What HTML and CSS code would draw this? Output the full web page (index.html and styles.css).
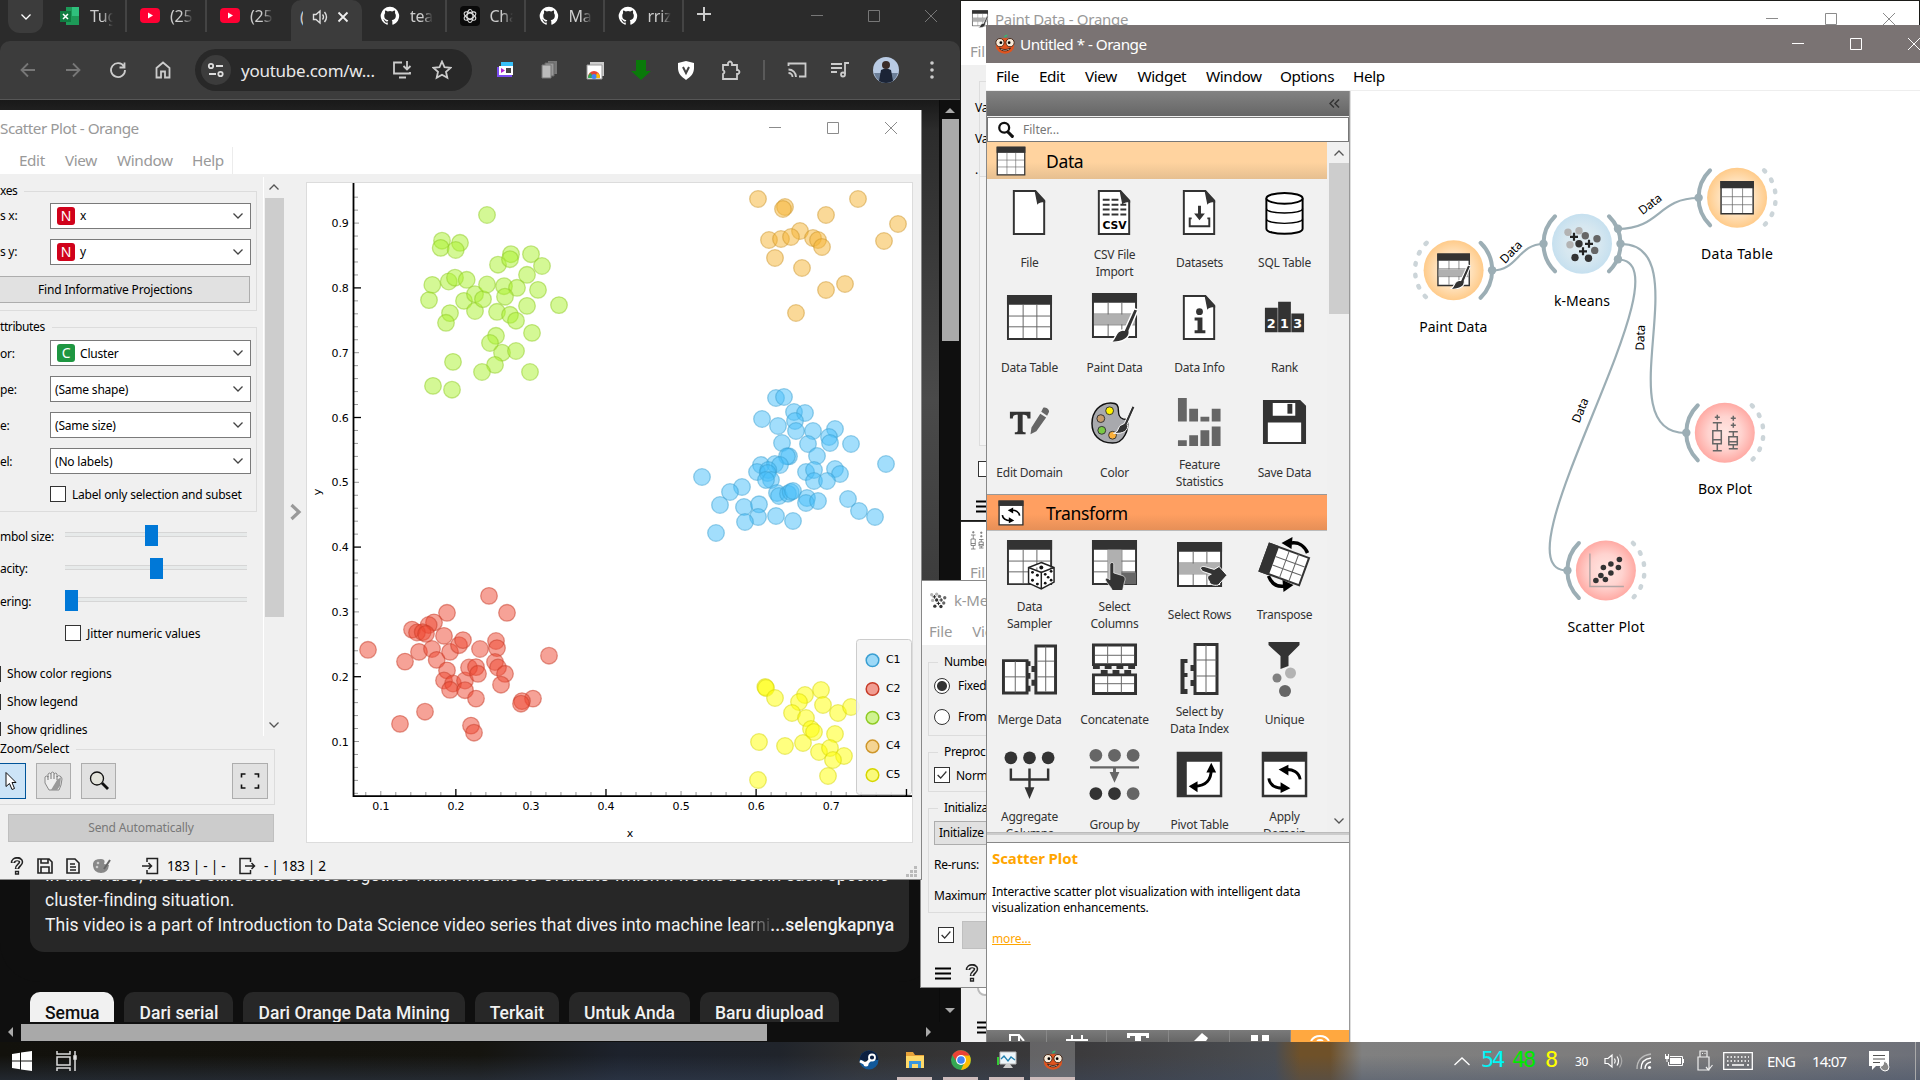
FILE: index.html
```html
<!DOCTYPE html>
<html lang="en">
<head>
<meta charset="utf-8">
<title>Untitled * - Orange</title>
<link rel="stylesheet" href="styles.css">
</head>
<body>
<svg class="sprite" aria-hidden="true">
  <defs>
    <radialGradient id="g-data"><stop offset="0" stop-color="#fff0dc"/><stop offset=".55" stop-color="#ffe3bf"/><stop offset="1" stop-color="#ffcb8a"/></radialGradient>
    <radialGradient id="g-unsup"><stop offset="0" stop-color="#e2edf2"/><stop offset=".6" stop-color="#d6e7f0"/><stop offset="1" stop-color="#c6e0ef"/></radialGradient>
    <radialGradient id="g-vis"><stop offset="0" stop-color="#ffe6e2"/><stop offset=".55" stop-color="#ffd3cf"/><stop offset="1" stop-color="#ffaaa4"/></radialGradient>
  </defs>
  <symbol id="i-table" viewBox="0 0 48 48"><path fill="#fff" stroke="#333" stroke-width="2" d="M2 2h44v44H2z"/><path fill="#333" d="M1 1h46v10H1z"/><path stroke="#666" d="M3 22.500h42M3 33.500h42M17.500 11v34M31.500 11v34"/></symbol>
  <symbol id="i-brush" viewBox="0 0 48 48"><path fill="#333" stroke="#fff" stroke-width="1.500" d="M44 15l4 1.500-9 21c1 7-5 12-20 12 6-2 5-8 9-11 2-1.500 4-2 6-1.500z"/></symbol>
  <symbol id="i-paint" viewBox="0 0 48 52"><use href="#i-table" width="48" height="48"/><path fill="#b0b0b0" d="M3 23h42v10H3z"/><use href="#i-brush" width="48" height="50" y="1"/></symbol>
  <symbol id="i-page" viewBox="0 0 48 48"><path fill="#fff" stroke="#333" stroke-width="2" d="M8 2h22l9 10v34H8z"/><path fill="#333" d="M29 1l11 11v2c-4-1-6 0-8 2z"/></symbol>
  <symbol id="i-csv" viewBox="0 0 48 48"><use href="#i-page"/><path stroke="#333" stroke-width="2" stroke-dasharray="7 2" d="M12 11h17M12 16h24M12 21h24M12 26h24"/><text x="24" y="41" text-anchor="middle" class="csv-text">CSV</text></symbol>
  <symbol id="i-datasets" viewBox="0 0 48 48"><use href="#i-page"/><path fill="#333" d="M22.500 17h3v8h4L24 32l-5.500-7h4z"/><path fill="none" stroke="#333" stroke-width="2" d="M16 30h-2v8h20v-8h-2"/></symbol>
  <symbol id="i-sql" viewBox="0 0 48 48"><path fill="#fff" stroke="#000" stroke-width="2" d="M5.500 9.500v31c0 7 37 7 37 0v-31"/><ellipse cx="24" cy="9.500" rx="18.500" ry="5.500" fill="#fff" stroke="#000" stroke-width="2"/><path fill="none" stroke="#000" stroke-width="1.300" d="M5.500 20c0 6 37 6 37 0M5.500 30.500c0 6 37 6 37 0"/></symbol>
  <symbol id="i-info" viewBox="0 0 48 48"><use href="#i-page"/><circle cx="24" cy="18" r="3.500" fill="#333"/><path fill="#333" d="M19 24h8v13h3v3H19v-3h3V27h-3z"/></symbol>
  <symbol id="i-rank" viewBox="0 0 48 48"><path fill="#333" d="M4 14h13v25H4zM17.500 8h13v31h-13zM31 20h13v19H31z"/><text class="rank-text" x="10.500" y="35" text-anchor="middle">2</text><text class="rank-text" x="24" y="35" text-anchor="middle">1</text><text class="rank-text" x="37.500" y="35" text-anchor="middle">3</text></symbol>
  <symbol id="i-domain" viewBox="0 0 48 48"><path fill="#333" d="M4 13h21v7h-3c0-3-1-4-5-4v16c0 2 1 2 3 2v2H9v-2c2 0 3 0 3-2V16c-4 0-5 1-5 4H4z"/><path fill="#666" d="M35 15l6 4-10 14-6 3 1-7zM38 9c4-1 6 2 6 4l-2 4-6-4z"/></symbol>
  <symbol id="i-color" viewBox="0 0 48 48"><path fill="#a8a9ad" stroke="#111" stroke-width="1.500" d="M20 4c7 0 8 3 8 8 0 7 3 9 9 9 2 10-3 24-15 24C8 45 1 36 1 25 1 13 9 4 20 4z"/><circle cx="19" cy="12" r="4" fill="#fff200" stroke="#333"/><circle cx="10" cy="20" r="4" fill="#c69c6d" stroke="#333"/><circle cx="11" cy="32" r="4" fill="#7ac943" stroke="#333"/><circle cx="22" cy="37" r="4" fill="#fbb03b" stroke="#333"/><path fill="#333" stroke="#fff" d="M42 7l3 1-8 18c2 6-4 10-14 9 5-1 4-5 7-8l4-2z"/></symbol>
  <symbol id="i-stats" viewBox="0 0 48 52"><path fill="#666" d="M2 1h9v24H2zM13.500 12h9v13h-9zM25 20h9v5h-9zM36.500 12h9v13h-9zM2 44h9v6H2zM13.500 39h9v11h-9zM25 34h9v16h-9zM36.500 30h9v20h-9z"/></symbol>
  <symbol id="i-save" viewBox="0 0 48 48"><path fill="#333" d="M2 1h38l6 6v39H2z"/><path fill="#fff" d="M12 4h23v13H12zM7 24h34v20H7z"/><path fill="#333" d="M27 5h5v10h-5z"/></symbol>
  <symbol id="i-spin" viewBox="0 0 48 48"><path fill="none" stroke="#000" stroke-width="3" d="M8 26c1 7 7 10 15 10M40 27c-1-7-8-11-15-10"/><path d="M28 12l-10 5 10 6zM20 30l10 6-10 5z"/></symbol>
  <symbol id="i-apply" viewBox="0 0 48 48"><path fill="#fff" stroke="#333" stroke-width="2.500" d="M2 2h44v44H2z"/><path fill="#333" d="M1 1h46v10H1z"/><use href="#i-spin" y="2"/></symbol>
  <symbol id="i-sampler" viewBox="0 0 52 52"><use href="#i-table" width="48" height="48"/><path fill="#fff" stroke="#222" stroke-width="1.500" d="M36 24l13 5v15l-13 7-13-6V29zM23 29l13 5 13-5M36 34v17"/><g fill="#111"><circle cx="36" cy="29" r="2"/><circle cx="27" cy="34" r="1.500"/><circle cx="32" cy="37" r="1.500"/><circle cx="27" cy="42" r="1.500"/><circle cx="32" cy="46" r="1.500"/><circle cx="40" cy="36" r="1.400"/><circle cx="46" cy="33" r="1.400"/><circle cx="43" cy="39" r="1.400"/><circle cx="40" cy="45" r="1.400"/><circle cx="46" cy="42" r="1.400"/></g></symbol>
  <symbol id="i-hand" viewBox="0 0 48 48"><path fill="#333" stroke="#fff" d="M10 2c4-2 5 1 5 3v13l13 4c5 1 6 5 4 10l-2 9-1 5H13c-1-5-9-12-11-17 0-4 4-3 7 0V5z"/></symbol>
  <symbol id="i-columns" viewBox="0 0 48 52"><use href="#i-table" width="48" height="48"/><path fill="#b0b0b0" d="M17 11h14v34H17z"/><path fill="#666" d="M31 34h15v12H31z"/><use href="#i-hand" x="13" y="23" width="32" height="31"/></symbol>
  <symbol id="i-rows" viewBox="0 0 52 48"><use href="#i-table" width="48" height="48"/><path fill="#b0b0b0" d="M3 23h42v11H3z"/><path fill="#333" stroke="#fff" d="M25 28c1-3 4-2 7-1l7 2 5-3 8 9-9 10c-5 1-9-1-9-4-3-3-2-6 2-7l-9-3z"/></symbol>
  <symbol id="i-transpose" viewBox="0 0 56 56"><g transform="rotate(20 28 28)"><path fill="#fff" stroke="#333" stroke-width="2" d="M7 14h42v29H7z"/><path fill="#333" d="M6 13h11v31H6z"/><path stroke="#666" d="M17 24h31M17 33h31M28 14v29M38 14v29"/></g><path fill="none" stroke="#000" stroke-width="3.500" d="M51 17C48 10 42 6 35 7M12 40c3 8 9 11 16 10"/><path d="M36 1L25 7l10 6zM26 44l11 5-10 7z"/></symbol>
  <symbol id="i-merge" viewBox="0 0 58 52"><path fill="#fff" stroke="#333" stroke-width="3" d="M2.500 17.500h24v33h-24zM35.500 2.500h20v48h-20z"/><path stroke="#666" d="M4 34h21M14.500 18v32M37 18h17M37 34h17M45.500 3v46"/><path fill="#333" d="M26 18h4v5h-4zM26 30h4v6h-4zM26 43h4v6h-4zM31 23h5v6h-5zM31 37h5v6h-5z"/></symbol>
  <symbol id="i-concat" viewBox="0 0 48 54"><path fill="#fff" stroke="#333" stroke-width="3" d="M2.500 2.500h43v20h-43zM2.500 33h43v19h-43z"/><path stroke="#666" d="M4 13h40M4 42h40M17 3v19M31 3v19M17 34v17M31 34v17"/><path stroke="#333" stroke-width="4" stroke-dasharray="7 5" d="M2 25h44M10 30h32"/></symbol>
  <symbol id="i-index" viewBox="0 0 40 54"><path fill="#fff" stroke="#333" stroke-width="3" d="M15.500 2.500h22v49h-22z"/><path stroke="#666" d="M17 18h20M17 34h20M26.500 3v48"/><path fill="#333" d="M1 17h7v4H5v10h3v4H5v12h3v5H1zM11 23h4v6h-4zM11 38h4v6h-4z"/></symbol>
  <symbol id="i-unique" viewBox="0 0 48 56"><path fill="#333" d="M8 1h31v3L28 15v10l-8 3V15L8 4z"/><circle cx="30" cy="32" r="5.500" fill="#b3b3b3"/><circle cx="16.500" cy="37" r="4.500" fill="#808080"/><circle cx="24.500" cy="50" r="6" fill="#666"/></symbol>
  <symbol id="i-aggregate" viewBox="0 0 52 52"><g fill="#333"><circle cx="7" cy="9" r="6.500"/><circle cx="26" cy="9" r="6.500"/><circle cx="45" cy="9" r="6.500"/><path d="M21 39h10l-5 12z"/></g><path fill="none" stroke="#333" stroke-width="2.500" d="M7 20v11h38V20M26 20v22"/></symbol>
  <symbol id="i-group" viewBox="0 0 52 54"><g fill="#666"><circle cx="7" cy="8" r="6.500"/><circle cx="26" cy="8" r="6.500"/><circle cx="45" cy="8" r="6.500"/><circle cx="45" cy="47" r="6.500"/><path d="M1 19h50v2.500H27.500V25H31l-5 11-5-11h3.500v-3.500H1z"/></g><circle cx="7" cy="47" r="6.500" fill="#333"/><circle cx="26" cy="47" r="6.500" fill="#333"/></symbol>
  <symbol id="i-pivot" viewBox="0 0 48 48"><path fill="#fff" stroke="#333" stroke-width="2.500" d="M2 2h44v44H2z"/><path fill="#333" d="M1 1h46v10H11v36H1z"/><path fill="none" stroke="#000" stroke-width="3" d="M19 36c12 0 17-7 17-17"/><path d="M31 22l5-10 5 10zM22 31l-9 5 9 6z"/></symbol>
  <symbol id="i-search" viewBox="0 0 20 20"><circle cx="8" cy="7.500" r="5.500" fill="none" stroke="#111" stroke-width="2.500"/><path stroke="#111" stroke-width="3.500" stroke-linecap="round" d="M12.500 12.500l4.500 4.500"/></symbol>
  <symbol id="i-min" viewBox="0 0 14 14"><path fill="none" stroke="currentColor" d="M1 6.500h12"/></symbol>
  <symbol id="i-max" viewBox="0 0 14 14"><path fill="none" stroke="currentColor" d="M1.500 1.500h11v11h-11z"/></symbol>
  <symbol id="i-close" viewBox="0 0 14 14"><path fill="none" stroke="currentColor" d="M1 1l12 12M13 1L1 13"/></symbol>
  <symbol id="i-down" viewBox="0 0 12 8"><path fill="none" stroke="currentColor" stroke-width="1.300" d="M1.500 1.500L6 6l4.500-4.500"/></symbol>
  <symbol id="i-check" viewBox="0 0 16 16"><path fill="none" stroke="#333" stroke-width="1.500" d="M3 8l3.500 3.500L13 4"/></symbol>
  <symbol id="i-ham" viewBox="0 0 16 13"><path stroke="#000" stroke-width="2" d="M0 1.500h16M0 6.500h16M0 11.500h16"/></symbol>
  <symbol id="i-help" viewBox="0 0 14 18"><path fill="none" stroke="#222" stroke-width="4.500" d="M3 6c0-5 8-5 8-1 0 3-4 3-4 7"/><path fill="none" stroke="#f0f0f0" stroke-width="1.500" d="M3 5.500c0-4 8-4 8-.5 0 3-4 3-4 6.500"/><path fill="#f0f0f0" stroke="#222" stroke-width="1.300" d="M5.500 14.500h3v2.500h-3z"/></symbol>
  <symbol id="i-github" viewBox="0 0 24 24"><path fill="#fff" d="M12 1A11 11 0 0 0 8.500 22.500c.6.100.8-.3.800-.6v-2c-3 .7-3.700-1.400-3.700-1.400-.5-1.200-1.200-1.600-1.200-1.600-1-.7 0-.7 0-.7 1.200 0 1.800 1.100 1.800 1.100 1 1.800 2.600 1.300 3.200 1 .1-.7.400-1.300.7-1.500-2.500-.3-5-1.200-5-5.500 0-1.200.4-2.200 1.100-3-.1-.3-.5-1.400.1-2.900 0 0 .9-.3 3 1.100a10 10 0 0 1 5.500 0c2.100-1.400 3-1.100 3-1.100.6 1.500.2 2.600.1 2.900.7.800 1.100 1.800 1.100 3 0 4.300-2.600 5.200-5 5.500.4.300.8 1 .8 2v3c0 .3.200.7.800.6A11 11 0 0 0 12 1z"/></symbol>
  <symbol id="i-yt" viewBox="0 0 20 20"><rect y="2" width="20" height="15" rx="4" fill="#ff0033"/><path fill="#fff" d="M8 6.500l5 3-5 3z"/></symbol>
  <symbol id="i-orange" viewBox="0 0 24 24"><ellipse cx="12" cy="14" rx="10" ry="8.500" fill="#e0541f"/><path fill="#3cb371" d="M11 5c0-3 2-3 4-3-1 2-2 3-4 3z"/><circle cx="6.500" cy="10.500" r="4.500" fill="#f7ead8" stroke="#402010"/><circle cx="17.500" cy="10.500" r="4.500" fill="#f7ead8" stroke="#402010"/><circle cx="7.500" cy="10.500" r="1.500"/><circle cx="16.500" cy="10.500" r="1.500"/><path fill="#fff" stroke="#402010" d="M6 16.500c4 2 8 2 12 0-1 4-11 4-12 0z"/></symbol>
  <symbol id="i-kmeans" viewBox="-20 -20 40 40"><g fill="#b3b3b3"><circle cx="-14" cy="-11.600" r="3.700"/><circle cx="-3" cy="-13" r="3.700"/><circle cx="-12" cy="1" r="3.700"/></g><g fill="#666"><circle cx="3.300" cy="-8" r="3.700"/><circle cx="15" cy="-5" r="3.700"/><circle cx="12.700" cy="6.600" r="3.700"/></g><g fill="#333"><circle cx="-3" cy="0" r="3.700"/><circle cx="-7" cy="13.700" r="3.700"/><circle cx="6.500" cy="14.500" r="3.700"/></g><path stroke="#222" stroke-width="2.200" d="M-12-7h8M-8-11v8M3 0h8M7-4v8M-3 7.500h8M1 3.500v8"/></symbol>
  <symbol id="i-box" viewBox="-15 -20 30 40"><path fill="none" stroke="#666" stroke-width="1.500" d="M-12-10h9M-7.500-10v8M-12-2h8.500V11H-12zM-12 7h8.500M-7.500 11v7M-12 18h9M-7.500-18v5M-10-15.500h5M4-1h9M8.500-1v5M4 4h8.500v8H4zM4 9h8.500M8.500 12v4M4 16h9M8.500-17v5M6-14.500h5M8.500-10v5M6-7.500h5"/></symbol>
</svg>

<main class="desktop">

<section class="window chrome">
  <div class="tabstrip">
    <span class="tab-search"><svg width="12" height="8"><use href="#i-down"/></svg></span>
    <span class="tab"><svg class="fav" viewBox="0 0 20 20"><path fill="#1d9a58" d="M6 1h13v18H6z"/><path fill="#2fc07c" d="M12 1h7v9h-7z"/><path fill="#107c41" d="M0 5h11v11H0z"/><path stroke="#fff" stroke-width="1.500" d="M3 8l5 5M8 8l-5 5"/></svg><span class="tab-name">Tug</span></span>
    <span class="tab"><svg class="fav"><use href="#i-yt"/></svg><span class="tab-name">(25</span></span>
    <span class="tab last"><svg class="fav"><use href="#i-yt"/></svg><span class="tab-name">(25</span></span>
    <span class="tab-active">
      <span>(</span>
      <svg width="17" height="16" viewBox="0 0 17 16" fill="none" stroke="#ddd" stroke-width="1.400"><path d="M1.500 5.500H4L8 2v12l-4-3.500H1.500zM10.500 5.500q2 2.500 0 5M12.500 3q4 5 0 10"/></svg>
      <svg width="12" height="12" viewBox="0 0 12 12" stroke="#eee" stroke-width="1.800"><path d="M1.500 1.500l9 9M10.500 1.500l-9 9"/></svg>
    </span>
    <span class="tab first"><svg class="fav"><use href="#i-github"/></svg><span class="tab-name">tea</span></span>
    <span class="tab"><svg class="fav" viewBox="0 0 20 20"><rect width="20" height="20" rx="4" fill="#0a0a0a"/><g fill="none" stroke="#ddd" stroke-width="1.200"><ellipse cx="10" cy="10" rx="3" ry="6.500"/><ellipse cx="10" cy="10" rx="3" ry="6.500" transform="rotate(60 10 10)"/><ellipse cx="10" cy="10" rx="3" ry="6.500" transform="rotate(120 10 10)"/></g></svg><span class="tab-name">Cha</span></span>
    <span class="tab"><svg class="fav"><use href="#i-github"/></svg><span class="tab-name">Ma</span></span>
    <span class="tab"><svg class="fav"><use href="#i-github"/></svg><span class="tab-name">rriz</span></span>
    <svg class="newtab" width="14" height="14" viewBox="0 0 14 14" stroke="#ccc" stroke-width="2"><path d="M7 0v14M0 7h14"/></svg>
    <span class="win-buttons dim"><svg><use href="#i-min"/></svg><svg><use href="#i-max"/></svg><svg><use href="#i-close"/></svg></span>
  </div>
  <div class="toolbar">
    <svg class="tb off" viewBox="0 0 20 20"><path d="M17 10H4M10 3.500L3.500 10l6.500 6.500"/></svg>
    <svg class="tb off" viewBox="0 0 20 20"><path d="M3 10h13M10 3.500l6.500 6.500-6.500 6.500"/></svg>
    <svg class="tb" viewBox="0 0 20 20"><path d="M16 6.500A7 7 0 1 0 17 10M16.500 2.500v5h-5"/></svg>
    <svg class="tb" viewBox="0 0 20 20"><path d="M3.500 8L10 2.500 16.500 8v9.500h-4.500v-6H8v6H3.500z"/></svg>
    <div class="omnibox">
      <span class="site"><svg viewBox="0 0 18 18" width="18" height="18" fill="none" stroke="#ddd" stroke-width="1.800"><circle cx="4" cy="5" r="2.200"/><path d="M9 5h7M2 13h7"/><circle cx="13.500" cy="13" r="2.200"/></svg></span>
      <span class="url">youtube.com/w...</span>
      <svg class="tb" viewBox="0 0 20 20"><path d="M10 2.500H2v11h16V12M7 17.500h7M15 1v8M11.500 6L15 9.500 18.500 6"/></svg>
      <svg class="tb" viewBox="0 0 20 20"><path d="M10 1.500l2.500 5.700 6 .6-4.500 4 1.300 6L10 14.700l-5.300 3.100 1.300-6-4.500-4 6-.6z"/></svg>
    </div>
    <div class="extensions">
      <svg viewBox="0 0 20 20"><path fill="#7b4df0" d="M2 7h15v10H2z"/><path fill="#38c0f8" d="M6 2h12v6H6z"/><path fill="#fff" d="M4 6h14v9H4z"/><path fill="#b020d0" d="M6 8l4 2.500L6 13z"/><path fill="#444" d="M11 8h5v5h-5z"/></svg>
      <svg viewBox="0 0 20 20"><path fill="#777" d="M8 1h9v13H8z"/><path fill="#999" stroke="#666" d="M5 3h9v13H5z"/><path fill="#bbb" stroke="#777" d="M2 5h9v13H2z"/></svg>
      <svg viewBox="0 0 20 20"><path fill="#ccc" d="M5 2h14v14H5z"/><path fill="#fff" stroke="#999" d="M2 5h15v14H2z"/><path fill="#ea4335" d="M3 17a6 6 0 0 1 12 0z"/><path fill="#34a853" d="M3 18q0-4 3-5l2 5z"/><path fill="#fbbc05" d="M15 18q0-4-3-5l-2 5z"/><circle cx="9" cy="16.500" r="2.500" fill="#4285f4"/></svg>
      <svg viewBox="0 0 20 20"><path fill="#0a7a0a" d="M5 0h10v11h5L10 20 0 11h5z"/></svg>
      <svg viewBox="0 0 20 20"><path fill="#fff" d="M10 1l8 2v5c0 6-4 9-8 12-4-3-8-6-8-12V3z"/><path fill="none" stroke="#444" stroke-width="2" d="M7 7l3 6 3-6"/></svg>
      <svg viewBox="0 0 20 20" fill="none" stroke="#ccc" stroke-width="1.800"><path d="M2 5h5V3q2-3 4 0v2h5v5h1q3 2 0 4h-1v5H2v-5q3-2 0-4z"/></svg>
    </div>
    <i class="tb-sep"></i>
    <div class="toolbar-end">
      <svg class="tb" viewBox="0 0 20 20"><path d="M1.500 6V3.500h17v13H12M1.500 9.500a7.500 7.500 0 0 1 7.500 7.500M1.500 13a4 4 0 0 1 4 4"/></svg>
      <svg class="tb" viewBox="0 0 20 20"><path d="M1 4h11M1 8h11M1 12h6M19 3h-4v11"/><circle cx="13" cy="14.500" r="2"/></svg>
      <svg class="avatar" viewBox="0 0 26 26"><circle cx="13" cy="13" r="13" fill="#b9cbe4"/><path fill="#6c7f98" d="M1 16h24q-3 10-12 10T1 16z"/><path fill="#1b2436" d="M6 24l2-11q5-3 10 0l2 11q-7 4-14 0z"/><circle cx="13" cy="8" r="4" fill="#3a2b28"/></svg>
      <svg class="tb" viewBox="0 0 20 20"><g fill="#ccc" stroke="none"><circle cx="10" cy="3" r="1.800"/><circle cx="10" cy="10" r="1.800"/><circle cx="10" cy="17" r="1.800"/></g></svg>
    </div>
  </div>
  <div class="page">
    <div class="page-main">
      <div class="description">
        <p>In this video, we use silhouette scores together with k-means to evaluate which k works best in each specific</p>
        <p>cluster-finding situation.</p>
        <p class="last-line"><span>This video is a part of Introduction to Data Science video series that dives into machine lea<span class="fade">rni</span></span><b>...selengkapnya</b></p>
      </div>
      <div class="chips"><span class="chip on">Semua</span><span class="chip">Dari serial</span><span class="chip">Dari Orange Data Mining</span><span class="chip">Terkait</span><span class="chip">Untuk Anda</span><span class="chip">Baru diupload</span></div>
    </div>
    <div class="vscroll"><i class="tri up"></i><i class="thumb"></i><i class="tri down"></i></div>
    <div class="hscroll"><i class="tri left"></i><i class="thumb"></i><i class="tri right"></i></div>
  </div>
</section>

<section class="window paint-window">
  <header class="titlebar"><svg width="18" height="18"><use href="#i-paint"/></svg><span>Paint Data - Orange</span><span class="win-buttons"><svg><use href="#i-min"/></svg><svg><use href="#i-max"/></svg><svg><use href="#i-close"/></svg></span></header>
  <div class="strip-menu">Fil</div>
  <div class="strip-body">
    <div class="strip-group"><span>Va</span><span>Va</span><span>.</span></div>
    <div class="strip-canvas"></div>
    <span class="checkbox"></span>
    <svg width="16" height="13"><use href="#i-ham"/></svg>
  </div>
</section>

<section class="window box-window">
  <header><svg width="16" height="20"><use href="#i-box"/></svg></header>
  <div class="strip-menu">Fil</div>
  <div class="box-body"><i class="ring"></i><svg width="16" height="13"><use href="#i-ham"/></svg></div>
</section>

<section class="window kmeans-window">
  <header><svg width="18" height="18"><use href="#i-kmeans"/></svg><span>k-Means</span></header>
  <nav><span>File</span><span>View</span></nav>
  <div class="km-body">
    <fieldset class="g1"><legend>Number</legend><p><i class="radio on"></i>Fixed</p><p><i class="radio"></i>From</p></fieldset>
    <fieldset class="g2"><legend>Preproc</legend><p><span class="checkbox"><svg><use href="#i-check"/></svg></span>Norm</p></fieldset>
    <fieldset class="g3"><legend>Initializa</legend><span class="km-btn">Initialize</span><p>Re-runs:</p><p>Maximum</p></fieldset>
    <div class="km-apply"><span class="checkbox"><svg><use href="#i-check"/></svg></span><i></i></div>
    <div class="km-status"><svg width="16" height="13"><use href="#i-ham"/></svg><svg width="14" height="18"><use href="#i-help"/></svg></div>
  </div>
</section>

<section class="window scatter-window">
  <header class="sc-title"><span>Scatter Plot - Orange</span><span class="win-buttons"><svg><use href="#i-min"/></svg><svg><use href="#i-max"/></svg><svg><use href="#i-close"/></svg></span></header>
  <nav class="sc-menu"><span>Edit</span><span>View</span><span>Window</span><span>Help</span></nav>
  <div class="sc-body">
    <aside class="controls">
      <div class="scroll-row">
        <div class="scroll-area">
          <fieldset class="axes"><legend>xes</legend>
            <div class="row"><label>s x:</label><span class="combo"><b class="var num">N</b>x<svg><use href="#i-down"/></svg></span></div>
            <div class="row"><label>s y:</label><span class="combo"><b class="var num">N</b>y<svg><use href="#i-down"/></svg></span></div>
            <span class="find">Find Informative Projections</span>
          </fieldset>
          <fieldset class="attrs"><legend>ttributes</legend>
            <div class="row"><label>or:</label><span class="combo"><b class="var cat">C</b>Cluster<svg><use href="#i-down"/></svg></span></div>
            <div class="row"><label>pe:</label><span class="combo">(Same shape)<svg><use href="#i-down"/></svg></span></div>
            <div class="row"><label>e:</label><span class="combo">(Same size)<svg><use href="#i-down"/></svg></span></div>
            <div class="row"><label>el:</label><span class="combo">(No labels)<svg><use href="#i-down"/></svg></span></div>
            <div class="only"><span class="checkbox"></span>Label only selection and subset</div>
          </fieldset>
          <div class="slider-row"><label>mbol size:</label><span class="slider"><i style="margin-left:80px"></i></span></div>
          <div class="slider-row"><label>acity:</label><span class="slider"><i style="margin-left:85px"></i></span></div>
          <div class="slider-row"><label>ering:</label><span class="slider"><i style="margin-left:0px"></i></span></div>
          <div class="jitter"><span class="checkbox"></span>Jitter numeric values</div>
          <div class="shows"><span>Show color regions</span><span>Show legend</span><span>Show gridlines</span></div>
        </div>
        <div class="qscroll"><svg class="flip" width="12" height="8"><use href="#i-down"/></svg><i></i><svg width="12" height="8"><use href="#i-down"/></svg></div>
      </div>
      <fieldset class="zoom"><legend>Zoom/Select</legend>
        <span class="tool on"><svg width="20" height="20" viewBox="0 0 20 20"><path fill="#fff" stroke="#111" d="M6 1.500v14l3.500-3 2.500 6 2.500-1-2.500-6h4z"/></svg></span>
        <span class="tool"><svg width="22" height="22" viewBox="0 0 22 22"><path fill="#eee" stroke="#888" d="M6 20L2 13V7q1-2 3 0V4q2-2 3 0V3q2-2 3 0v1q2-2 3 0v3q1-2 3-1t2 3l-1 6-2 5z"/><path fill="#999" d="M14 10l4-3-1 9-3 4H8z"/><path stroke="#777" d="M5 6v4M8 4v5M11 4v5M14 6v4"/></svg></span>
        <span class="tool"><svg width="22" height="22" viewBox="0 0 22 22"><circle cx="9" cy="8.500" r="6.500" fill="#e4e4dc" stroke="#111" stroke-width="1.300"/><path stroke="#111" stroke-width="2.800" d="M14 13l6 6"/></svg></span>
        <span class="tool fit"><svg width="20" height="16" viewBox="0 0 20 16" fill="none" stroke="#111" stroke-width="1.600"><path d="M1.500 4.500V1h4M14.500 1h4v3.500M18.500 11.500V15h-4M5.500 15h-4v-3.500"/></svg></span>
      </fieldset>
      <span class="send">Send Automatically</span>
      <div class="status">
        <svg width="14" height="18"><use href="#i-help"/></svg>
        <svg width="16" height="16" viewBox="0 0 16 16" fill="none" stroke="#222" stroke-width="1.600"><path d="M1 1h11l3 3v11H1zM4 1v4h7V1M4 15V9h8v6"/></svg>
        <svg width="14" height="16" viewBox="0 0 14 16" fill="none" stroke="#222" stroke-width="1.600"><path d="M1 1h8l4 4v10H1zM4 6h5M4 9h6M4 12h6"/></svg>
        <svg width="18" height="16" viewBox="0 0 18 16"><path fill="#888" d="M8 1q5 0 3 5l5 1q-1 8-8 8T0 8t8-7z"/><path stroke="#666" stroke-width="2" d="M17 2l-6 9"/><circle cx="5" cy="5" r="1.300" fill="#ccc"/><circle cx="4" cy="9" r="1.300" fill="#ccc"/></svg>
        <svg class="io" width="17" height="18" viewBox="0 0 17 18" fill="none" stroke="#222" stroke-width="1.500"><path d="M5 5V1.500h10.500v15H5V13M0 9h9M6.500 6l3 3-3 3"/></svg>
        <span>183 | - | -</span>
        <svg class="io" width="17" height="18" viewBox="0 0 17 18" fill="none" stroke="#222" stroke-width="1.500"><path d="M11.500 5V1.500H1v15h10.500V13M6 9h9M12.500 6l3 3-3 3"/></svg>
        <span>- | 183 | 2</span>
      </div>
    </aside>
    <div class="collapse"><svg width="12" height="18" viewBox="0 0 12 18" fill="none" stroke="#999" stroke-width="3.200"><path d="M1.500 2L9 9l-7.500 7"/></svg></div>
    <svg class="plot" viewBox="307 183 605 659">
      <g id="ticks"></g>
      <path class="axis" d="M353.500 183V796.200H912"/>
      <g id="points"></g>
      <text class="tick-label" x="630" y="837" text-anchor="middle">x</text>
      <text class="tick-label" transform="translate(321 492) rotate(-90)" text-anchor="middle">y</text>
      <rect class="legend-box" x="856.500" y="639.500" width="55" height="155" rx="3"/>
      <path class="tick major" d="M906.500 789v7"/>
      <g id="legend"></g>
    </svg>
    <svg class="grip" width="12" height="12" viewBox="0 0 12 12"><path fill="#bbb" d="M8 0h3v3H8zM4 4h3v3H4zM8 4h3v3H8zM0 8h3v3H0zM4 8h3v3H4zM8 8h3v3H8z"/></svg>
  </div>
</section>

<section class="window orange-window">
  <header class="or-title"><svg width="22" height="22"><use href="#i-orange"/></svg><span>Untitled * - Orange</span><span class="win-buttons"><svg><use href="#i-min"/></svg><svg><use href="#i-max"/></svg><svg><use href="#i-close"/></svg></span></header>
  <nav class="or-menu"><span>File</span><span>Edit</span><span>View</span><span>Widget</span><span>Window</span><span>Options</span><span>Help</span></nav>
  <div class="or-body">
    <aside class="dock">
      <div class="dock-head"><svg width="11" height="9" viewBox="0 0 11 9" fill="none" stroke="#333" stroke-width="1.500"><path d="M5 .5l-4 4 4 4M10 .5l-4 4 4 4"/></svg></div>
      <div class="filter"><svg width="18" height="18"><use href="#i-search"/></svg>Filter...</div>
      <div class="palette">
        <div class="tools">
          <h3 class="cat-data"><svg width="30" height="30"><use href="#i-table"/></svg>Data</h3>
          <div class="grid">
            <div><svg><use href="#i-page"/></svg><span>File</span></div>
            <div><svg><use href="#i-csv"/></svg><span>CSV File<br>Import</span></div>
            <div><svg><use href="#i-datasets"/></svg><span>Datasets</span></div>
            <div><svg><use href="#i-sql"/></svg><span>SQL Table</span></div>
            <div><svg><use href="#i-table"/></svg><span>Data Table</span></div>
            <div><svg class="h52"><use href="#i-paint"/></svg><span>Paint Data</span></div>
            <div><svg><use href="#i-info"/></svg><span>Data Info</span></div>
            <div><svg><use href="#i-rank"/></svg><span>Rank</span></div>
            <div><svg><use href="#i-domain"/></svg><span>Edit Domain</span></div>
            <div><svg><use href="#i-color"/></svg><span>Color</span></div>
            <div><svg class="h52"><use href="#i-stats"/></svg><span>Feature<br>Statistics</span></div>
            <div><svg><use href="#i-save"/></svg><span>Save Data</span></div>
          </div>
          <h3 class="cat-transform"><svg width="26" height="26"><use href="#i-apply"/></svg>Transform</h3>
          <div class="grid">
            <div><svg class="w52 h52 over"><use href="#i-sampler"/></svg><span>Data<br>Sampler</span></div>
            <div><svg class="h52"><use href="#i-columns"/></svg><span>Select<br>Columns</span></div>
            <div><svg class="w52 over"><use href="#i-rows"/></svg><span>Select Rows</span></div>
            <div><svg class="big"><use href="#i-transpose"/></svg><span>Transpose</span></div>
            <div><svg class="big"><use href="#i-merge"/></svg><span>Merge Data</span></div>
            <div><svg class="h54"><use href="#i-concat"/></svg><span>Concatenate</span></div>
            <div><svg class="h54"><use href="#i-index"/></svg><span>Select by<br>Data Index</span></div>
            <div><svg class="big"><use href="#i-unique"/></svg><span>Unique</span></div>
            <div><svg class="w52 h52"><use href="#i-aggregate"/></svg><span>Aggregate<br>Columns</span></div>
            <div><svg class="w52 h54"><use href="#i-group"/></svg><span>Group by</span></div>
            <div><svg><use href="#i-pivot"/></svg><span>Pivot Table</span></div>
            <div><svg><use href="#i-apply"/></svg><span>Apply<br>Domain</span></div>
          </div>
        </div>
        <div class="qscroll"><svg class="flip" width="12" height="8"><use href="#i-down"/></svg><i></i><svg width="12" height="8"><use href="#i-down"/></svg></div>
      </div>
      <div class="splitter"></div>
      <div class="help"><h4>Scatter Plot</h4><p>Interactive scatter plot visualization with intelligent data<br>visualization enhancements.</p><a>more...</a></div>
      <div class="dock-tools">
        <span><svg width="18" height="11" viewBox="0 0 18 11"><path fill="none" stroke="#fff" stroke-width="2" d="M2 11V5h9l5 6M11 5v6"/></svg></span>
        <span><svg width="24" height="11" viewBox="0 0 24 11"><path stroke="#fff" stroke-width="2" d="M1 10h22M7 5v6M17 5v6"/></svg></span>
        <span><svg width="24" height="11" viewBox="0 0 24 11"><path fill="#fff" d="M1 3h22v5h-3V6h-5v5H9V6H4v2H1z"/></svg></span>
        <span><svg width="24" height="11" viewBox="0 0 24 11"><path fill="#fff" d="M7 11l8-8 6 5-2 3z"/></svg></span>
        <span><svg width="20" height="11" viewBox="0 0 20 11"><path fill="#fff" d="M1 5h7v6H1zM12 5h7v6h-7z"/></svg></span>
        <span class="on"><svg width="20" height="11" viewBox="0 0 20 11"><path fill="none" stroke="#fff" stroke-width="2" d="M1 11q3-5 9-5t9 5M7 11q3-2 6 0"/></svg></span>
      </div>
    </aside>
    <svg class="canvas" viewBox="1350 91 570 951">
      <defs>
        <path id="arc-l" d="M-27-27.500A38.500 38.500 0 0 0-27 27.500"/>
        <path id="arc-r" d="M27-27.500A38.500 38.500 0 0 1 27 27.500"/>
      </defs>
      <g class="links">
        <path d="M1492 270.500C1518 270.500 1518 244 1543.500 244"/>
        <path d="M1618 229C1660 229 1658 198 1698.500 198"/>
        <path d="M1621 244C1701 244 1605 433 1685.500 433"/>
        <path d="M1618 259.500C1694 259.500 1491 570.500 1567 570.500"/>
      </g>
      <g transform="translate(1453.600 270.300)"><use href="#arc-l" class="open"/><use href="#arc-r" class="used"/><circle r="30" fill="url(#g-data)"/><use href="#i-paint" x="-17.500" y="-17.500" width="35" height="37"/><circle class="dot" cx="38.500" r="4.200"/></g>
      <g transform="translate(1582 243.800)"><use href="#arc-l" class="used"/><use href="#arc-r" class="used"/><circle r="30" fill="url(#g-unsup)"/><use href="#i-kmeans" x="-20" y="-20" width="40" height="40"/><circle class="dot" cx="-38.500" r="4.200"/><circle class="dot" cx="36" cy="-15" r="4.200"/><circle class="dot" cx="38.500" r="4.200"/><circle class="dot" cx="36" cy="15.500" r="4.200"/></g>
      <g transform="translate(1737.100 197.800)"><use href="#arc-l" class="used"/><use href="#arc-r" class="open"/><circle r="30" fill="url(#g-data)"/><use href="#i-table" x="-17.500" y="-17.500" width="35" height="35"/><circle class="dot" cx="-38.500" r="4.200"/></g>
      <g transform="translate(1724.800 432.800)"><use href="#arc-l" class="used"/><use href="#arc-r" class="open"/><circle r="30" fill="url(#g-vis)"/><use href="#i-box" x="-15" y="-20" width="30" height="40"/><circle class="dot" cx="-38.500" r="4.200"/></g>
      <g transform="translate(1605.900 570.500)"><use href="#arc-l" class="used"/><use href="#arc-r" class="open"/><circle r="30" fill="url(#g-vis)"/><path fill="none" stroke="#b3a5a5" stroke-width="1.500" d="M-16-17v33h34"/><g fill="#333"><circle cx="-10" cy="10" r="2.800"/><circle cx="-5" cy="5" r="2.800"/><circle cx="-.5" cy="9" r="2.800"/><circle cx="-2.500" cy="-3" r="2.800"/><circle cx="5" cy="2.500" r="2.800"/><circle cx="5" cy="-6.500" r="2.800"/><circle cx="12.500" cy="-3" r="2.800"/><circle cx="13.500" cy="-11" r="2.800"/></g><circle class="dot" cx="-38.500" r="4.200"/></g>
      <g class="link-label">
        <text transform="translate(1514 255) rotate(-46)">Data</text>
        <text transform="translate(1652.500 207.500) rotate(-38)">Data</text>
        <text transform="translate(1644.500 338) rotate(-88)">Data</text>
        <text transform="translate(1584 412) rotate(-68)">Data</text>
      </g>
      <g class="node-label">
        <text x="1453.300" y="331.500" textLength="68">Paint Data</text>
        <text x="1582" y="305.500" textLength="56">k-Means</text>
        <text x="1737" y="258.500" textLength="72">Data Table</text>
        <text x="1725" y="493.500" textLength="54">Box Plot</text>
        <text x="1606" y="631.500" textLength="77">Scatter Plot</text>
      </g>
    </svg>
  </div>
</section>

<footer class="taskbar">
  <svg class="start" width="20" height="20" viewBox="0 0 20 20" fill="#fff"><path d="M0 3l8-1.200v7.700H0zM9 1.600L20 0v9.500H9zM0 10.500h8v7.700L0 17zM9 10.500h11V20L9 18.400z"/></svg>
  <svg class="taskview" width="22" height="20" viewBox="0 0 22 20" fill="none" stroke="#ddd" stroke-width="1.500"><path d="M1 0v3h13V0M1 20v-3h13v3M1 6h13v8H1zM19 0v20"/><path fill="#fff" d="M18 5h2v3h-2z"/></svg>
  <div class="apps">
    <span class="app none"><svg viewBox="0 0 22 22"><circle cx="11" cy="11" r="9.500" fill="#12599a"/><path fill="#0b1f40" d="M1.500 11a9.500 9.500 0 0 1 19 0z"/><circle cx="14" cy="8.500" r="3" fill="none" stroke="#fff" stroke-width="1.800"/><path stroke="#fff" stroke-width="3" d="M2 12l6 3 4-4"/><circle cx="8" cy="15" r="2.500" fill="#fff"/></svg></span>
    <span class="app"><svg viewBox="0 0 22 22"><path fill="#e8a33a" d="M2 3h7l2 3h9v4H2z"/><path fill="#ffd968" d="M2 7h18v12H2z"/><path fill="#3a96dd" d="M5 19v-7h12v7h-3v-4H8v4z"/></svg></span>
    <span class="app"><svg viewBox="0 0 22 22"><circle cx="11" cy="11" r="10" fill="#34a853"/><path fill="#fbbc05" d="M19.500 6.200A10 10 0 0 1 11 21l4-9-4-6z"/><path fill="#ea4335" d="M2.300 6a10 10 0 0 1 17.400 0.500H11L7 13z"/><circle cx="11" cy="11" r="5" fill="#fff"/><circle cx="11" cy="11" r="3.800" fill="#4285f4"/></svg></span>
    <span class="app"><svg viewBox="0 0 22 22"><path fill="#eef6fa" stroke="#bbb" d="M4 3h16v12H4z"/><path fill="none" stroke="#2080b0" stroke-width="1.300" d="M5 10l3-3 4 5 3-4 4 3"/><path fill="#ccc" d="M10 15h4l3 4H7z"/><path fill="#3c3" d="M1 8h2v8H1z"/></svg></span>
    <span class="app active"><svg viewBox="0 0 24 24"><use href="#i-orange"/></svg></span>
  </div>
  <div class="tray">
    <svg width="16" height="9" viewBox="0 0 16 9" fill="none" stroke="#fff" stroke-width="1.300"><path d="M.5 8L8 1l7.500 7"/></svg>
    <b class="t54">54</b><b class="t48">48</b><b class="t8">8</b><span class="t30">30</span>
    <svg class="spk" width="20" height="18" viewBox="0 0 20 18" fill="none" stroke="#fff" stroke-width="1.200"><path d="M1 6.500h3L8 3v12l-4-3.500H1zM10.500 6.500q1.500 2.500 0 5M13 4.500q3 4.500 0 9"/><path stroke="#aaa" d="M15.500 2.500q4.500 6.500 0 13"/></svg>
    <svg class="wifi" width="18" height="18" viewBox="0 0 18 18" fill="none" stroke="#fff" stroke-width="1.300"><path stroke="#bbb" d="M2 17Q2 4 16 2"/><path d="M6 17Q6 7 16 6M10 17q0-6 6-7"/><circle cx="14.500" cy="15.500" r="1.600" fill="#fff" stroke="none"/></svg>
    <svg class="bat" width="20" height="16" viewBox="0 0 20 16"><path fill="none" stroke="#fff" d="M6 3.500h12.500v9H4.500V9M19.500 6v4"/><path fill="#fff" d="M6 5h11v6H6zM1 1h1v2h2V1h1v5H3.500v3h-1V6H1z"/></svg>
    <svg class="usb" width="16" height="22" viewBox="0 0 16 22" fill="none" stroke="#eee" stroke-width="1.200"><path d="M3 7V1h7v6M1 7h11v13H1zM5 3.500h1M7.500 3.500h1M9 17l2.500 3 4-5"/></svg>
    <svg class="kbd" width="30" height="18" viewBox="0 0 30 18" fill="none" stroke="#fff" stroke-width="1.300"><path d="M.7.700h28.600v16.600H.7z"/><path stroke-dasharray="1.500 2" d="M4 5h22M4 9h22"/><path d="M4 13h2M9 13h12M24 13h2"/></svg>
    <span class="eng">ENG</span><span class="clock">14:07</span>
    <svg class="notif" width="21" height="21" viewBox="0 0 21 21"><path fill="#fff" d="M0 0h20v15H7l-4 4v-4H0z"/><path stroke="#555" d="M4 4.500h12M4 8h12M4 11.500h7"/><path fill="#888" stroke="#fff" d="M15 10q0 5-4 6 2 4 5 4 4 0 4-4-1-5-5-6z"/></svg>
    <i class="peek"></i>
  </div>
</footer>
</main>
<script src="plot.js"></script>
</body>
</html>
```
FILE: styles.css
```css
:root {
  --tahoma: "Noto Sans", "DejaVu Sans", sans-serif;
  --segoe: "Noto Sans", "Open Sans", sans-serif;
}
* { box-sizing: border-box; }
body { margin: 0; background: #15140f; overflow: hidden; font-family: var(--tahoma); font-size: 12px; letter-spacing: -.25px; color: #000; }
p, h3, h4 { margin: 0; font-weight: 400; }
svg { display: block; flex: none; }
fieldset { margin: 0; min-width: 0; }
i { display: block; flex: none; }
.sprite { position: absolute; width: 0; height: 0; }
.desktop { position: relative; width: 1920px; height: 1080px; overflow: hidden; background: #1b1b18; }
.window { position: absolute; overflow: hidden; display: flex; flex-direction: column; }
.win-buttons { margin-left: auto; display: flex; align-items: center; color: #8b8b8b; }
.win-buttons svg { width: 14px; height: 14px; }
.checkbox { display: block; flex: none; width: 16px; height: 16px; background: #fff; border: 1px solid #333; }
.checkbox svg { width: 14px; height: 14px; }
.csv-text { font: bold 11px "DejaVu Sans", sans-serif; letter-spacing: 0; }
.rank-text { font: bold 13px "DejaVu Sans", sans-serif; fill: #fff; letter-spacing: 0; }

/* browser */
.chrome { left: 0; top: 0; width: 960px; height: 1042px; background: #2b2b2b; font-family: var(--segoe); }
.tabstrip { height: 41px; display: flex; align-items: flex-start; color: #ccc; font-size: 16px; }
.tab-search { width: 35px; height: 33px; margin: 0 17px 0 8px; background: #3c3c3c; border-radius: 0 0 12px 12px; display: flex; justify-content: center; align-items: center; color: #fff; }
.tab { display: flex; align-items: center; height: 32px; width: 66.500px; margin-right: 13.500px; border-right: 2px solid #444; }
.tab.last { width: 71px; margin-right: 0; border: 0; }
.tab.first { width: 67px; }
.tab.first, .tab.first ~ .tab { margin-right: 12.500px; }
.fav { width: 20px; height: 20px; margin-right: 10px; }
.tab-name { width: 23px; overflow: hidden; white-space: nowrap; -webkit-mask: linear-gradient(90deg, #000 55%, transparent); mask: linear-gradient(90deg, #000 55%, transparent); }
.tab-active { width: 71px; height: 41px; margin-right: 18px; padding: 0 13px 8px 9px; background: #3c3c3c; border-radius: 10px 10px 0 0; display: flex; align-items: center; justify-content: space-between; }
.tab-active span { width: 3px; overflow: hidden; }
.newtab { margin: 7px 0 0 0; }
.tabstrip .win-buttons { height: 32px; gap: 43px; padding-right: 22px; color: #777; }
.toolbar { height: 59px; flex: none; background: #3c3c3c; border-bottom: 1px solid #565656; border-radius: 10px 10px 0 0; display: flex; align-items: center; padding-left: 18px; }
.tb { width: 20px; height: 20px; fill: none; stroke: #ccc; stroke-width: 1.8; }
.toolbar > .tb { margin-right: 25px; }
.tb.off { stroke: #777; }
.omnibox { width: 277px; height: 42px; margin-left: -3px; border-radius: 21px; background: #282828; display: flex; align-items: center; padding-left: 6px; }
.site { width: 30px; height: 30px; border-radius: 15px; background: #3c3c3c; display: flex; align-items: center; justify-content: center; }
.url { width: 151px; margin-left: 10px; font-size: 17px; color: #e8e8e8; white-space: nowrap; letter-spacing: -.25px; }
.omnibox .tb + .tb { margin-left: 20px; }
.extensions { display: flex; gap: 25.200px; margin-left: 23px; }
.extensions svg { width: 20px; height: 20px; }
.tb-sep { width: 2px; height: 20px; background: #5a5a5a; margin-left: 22px; }
.toolbar-end { display: flex; align-items: center; gap: 23px; margin-left: 22px; }
.avatar { width: 26px; height: 26px; }
.page { flex: 1; display: grid; grid-template: 922px 20px / 939px 21px; background: #0f0f0f; }
.page-main { overflow: hidden; background: linear-gradient(180deg, #191919 0, #2c2c2c 30px, #4a4a4a 300px, #333 620px, #0f0f0f 760px); display: flex; flex-direction: column; justify-content: flex-end; }
.description { height: 192px; width: 879px; margin-left: 30px; padding: 103px 15px 0; border-radius: 14px; background: #272727; box-shadow: 0 0 0 30px #0f0f0f; color: #f1f1f1; font: 400 17.500px/25px Roboto, sans-serif; letter-spacing: .04px; white-space: nowrap; }
.last-line { display: flex; justify-content: space-between; }
.last-line b { font-weight: 500; letter-spacing: .1px; }
.fade { background: linear-gradient(90deg, #bbb, #444); -webkit-background-clip: text; background-clip: text; color: transparent; }
.chips { margin-top: 40px; height: 30px; padding-left: 30px; display: flex; gap: 10px; z-index: 1; overflow: hidden; background: #0f0f0f; }
.chip { height: 40px; padding: 0 15px; border-radius: 10px; background: #272727; color: #f1f1f1; font: 500 17.500px/42px Roboto, sans-serif; letter-spacing: .02px; white-space: nowrap; }
.chip.on { background: #f1f1f1; color: #0f0f0f; }
.vscroll { display: flex; flex-direction: column; align-items: center; padding: 8px 0 9px; border-left: 1px solid #0b0b0b; }
.vscroll .thumb { width: 17px; height: 222px; margin: 6px 0 auto; background: #a9a9a9; }
.hscroll { display: flex; align-items: center; padding-left: 8px; }
.hscroll .thumb { width: 746px; height: 17px; margin: 0 auto 0 8px; background: #a9a9a9; }
.hscroll .right { margin-right: 8px; }
.tri { width: 0; height: 0; border: 5px solid transparent; }
.tri.up { border-bottom-color: #aaa; border-top: 0; }
.tri.down { border-top-color: #aaa; border-bottom: 0; }
.tri.left { border-right-color: #aaa; border-left: 0; }
.tri.right { border-left-color: #aaa; border-right: 0; }

/* windows mostly covered by others */
.paint-window { left: 961px; top: 1px; width: 958px; height: 519px; background: #f0f0f0; color: #999; }
.titlebar { height: 36px; flex: none; padding: 0 23px 0 10px; background: #fff; display: flex; align-items: center; gap: 6px; font: 15px var(--segoe); letter-spacing: -.3px; }
.titlebar .win-buttons { gap: 44.500px; }
.strip-menu { height: 28px; flex: none; padding-left: 9px; background: #fff; color: #999; font: 15px/28px var(--segoe); }
.strip-body { display: flex; flex-direction: column; align-items: flex-start; padding-left: 13px; color: #000; }
.strip-group { width: 40px; height: 95px; margin: 16px 0 0 5px; padding-top: 10px; border-left: 1px solid #ddd; border-top: 1px solid #ddd; display: flex; flex-direction: column; line-height: 31px; }
.strip-group span { margin-left: -5px; height: 31px; }
.strip-canvas { width: 40px; height: 270px; margin-left: 5px; border: 1px solid #ddd; border-right: 0; background: #f4f4f4; }
.strip-body .checkbox { margin: 15px 0 0 4px; }
.strip-body > svg { margin: 23px 0 0 2px; }
.box-window { left: 961px; top: 521px; width: 60px; height: 521px; background: #f0f0f0; border-top: 1px solid #333; }
.box-window header { height: 36px; flex: none; padding: 8px 0 0 8px; background: #fff; }
.box-body { flex: 1; display: flex; flex-direction: column; justify-content: flex-end; gap: 25px; padding: 0 0 8px 16px; }
.ring { width: 16px; height: 16px; border: 2px solid #bbb; border-radius: 8px; background: #fff; }

/* k-Means */
.kmeans-window { left: 920px; top: 580px; width: 80px; height: 408px; background: #f0f0f0; border: 1px solid #888; white-space: nowrap; }
.kmeans-window header { height: 37px; flex: none; padding-left: 8px; background: #fff; color: #999; display: flex; align-items: center; gap: 7px; font: 15px var(--segoe); }
.kmeans-window nav { height: 27px; flex: none; padding-left: 8px; background: #fff; color: #999; display: flex; gap: 20px; font: 15px/27px var(--segoe); letter-spacing: -.2px; }
.km-body { padding: 9px 0 0 7px; }
.km-body fieldset { width: 110px; border: 1px solid #dcdcdc; padding: 0 0 0 5px; }
.km-body legend { padding: 0 6px; margin-left: 4px; line-height: 16px; letter-spacing: -.35px; }
.km-body p { display: flex; align-items: center; gap: 8px; height: 31px; }
.km-body .g1 { height: 82px; }
.km-body .g2 { height: 48px; margin-top: 8px; }
.km-body .g2 p { gap: 6px; height: 30px; }
.km-body .g3 { height: 113px; margin-top: 8px; }
.km-btn { display: block; height: 24px; margin: 5px 0 4px; padding-left: 4px; border: 1px solid #adadad; background: #e1e1e1; line-height: 21px; }
.radio { width: 16px; height: 16px; border: 1px solid #333; border-radius: 8px; background: #fff; }
.radio.on { background: radial-gradient(circle, #333 0 4.500px, #fff 5.500px); }
.km-apply { display: flex; align-items: center; gap: 8px; height: 28px; margin: 8px 0 0 10px; }
.km-apply i { width: 60px; height: 28px; background: #ccc; border: 1px solid #bfbfbf; }
.km-status { display: flex; align-items: center; gap: 14px; margin: 15px 0 0 7px; }

/* scatter plot widget */
.scatter-window { left: 0; top: 110px; width: 922px; height: 770px; background: #f0f0f0; border-right: 1px solid #888; border-bottom: 1px solid #888; }
.sc-title { height: 37px; flex: none; padding: 0 23px 2px 0; background: #fff; color: #999; display: flex; align-items: center; font: 15.300px var(--segoe); letter-spacing: -.5px; }
.sc-title .win-buttons { gap: 44px; }
.sc-menu { height: 27px; flex: none; padding-left: 19px; background: #fff; color: #999; display: flex; font: 15.300px/27px var(--segoe); letter-spacing: -.4px; }
.sc-menu span:nth-child(1) { width: 46px; }
.sc-menu span:nth-child(2) { width: 52px; }
.sc-menu span:nth-child(3) { width: 75px; }
.sc-menu span:nth-child(4) { width: 41px; border-right: 1px solid #ececec; }
.sc-body { flex: 1; display: flex; }
.controls { width: 285px; display: flex; flex-direction: column; }
.scroll-row { display: flex; height: 562px; padding-top: 3px; overflow: hidden; }
.scroll-area { width: 264px; flex: none; overflow: hidden; padding-top: 5px; border-right: 1px solid #fff; }
.controls fieldset { border: 1px solid #dcdcdc; border-left: 0; padding: 0; }
.controls legend { padding: 0 7px 0 0; line-height: 18px; letter-spacing: -.4px; }
.axes { width: 257px; height: 129px; }
.attrs { width: 257px; height: 194px; margin-top: 7px; }
.row { display: flex; align-items: center; justify-content: space-between; width: 251px; height: 26px; margin-top: 10px; }
.axes .row { height: 27px; margin-top: 9px; }
.axes .row:nth-of-type(1) { margin-top: 2px; }
.attrs .row:nth-of-type(1) { margin-top: 4px; }
.combo { width: 201px; height: 26px; padding: 0 6px 0 4px; background: #fff; border: 1px solid #7a7a7a; display: flex; align-items: center; letter-spacing: -.2px; }
.combo svg { width: 12px; height: 8px; margin-left: auto; color: #444; }
.var { width: 18px; height: 18px; margin: 0 5px 0 2px; border-radius: 3px; color: #fff; text-align: center; font-weight: 400; font-size: 14px; line-height: 18px; }
.num { background: #d0021b; }
.cat { background: #1e9641; }
.find { display: block; width: 250px; height: 27px; margin-top: 11px; padding-left: 38px; background: #e1e1e1; border: 1px solid #adadad; border-left: 0; line-height: 25px; letter-spacing: -.17px; }
.only { display: flex; align-items: center; gap: 6px; margin: 12px 0 0 50px; height: 16px; white-space: nowrap; letter-spacing: -.2px; }
.slider-row { display: flex; align-items: center; justify-content: space-between; width: 247px; height: 22px; margin-top: 13px; }
.slider-row + .slider-row { margin-top: 10.500px; }
.slider { width: 182px; height: 22px; background: linear-gradient(#d6d6d6, #d6d6d6) 0 7px / 100% 1px no-repeat, linear-gradient(#d6d6d6, #d6d6d6) 0 11px / 100% 1px no-repeat, linear-gradient(#e7eaea, #e7eaea) 0 8px / 100% 3px no-repeat; }
.slider i { width: 13px; height: 21px; background: #0078d7; }
.jitter { display: flex; align-items: center; gap: 6px; height: 16px; margin: 13px 0 0 65px; letter-spacing: -.1px; }
.shows { margin-top: 25px; display: flex; flex-direction: column; gap: 12px; align-items: flex-start; }
.shows span { height: 16px; padding-left: 6px; line-height: 15px; border-left: 1px solid #333; letter-spacing: -.15px; }
.qscroll { width: 20px; display: flex; flex-direction: column; align-items: center; color: #555; }
.qscroll i { width: 19px; background: #cdcdcd; }
.scroll-row .qscroll { padding: 6px 0 7px; }
.scroll-row .qscroll i { height: 419px; margin: 7px 0 auto; }
.flip { transform: rotate(180deg); }
.zoom { width: 275px; height: 65px; margin-top: 4px; display: flex; }
.zoom legend { letter-spacing: -.1px; }
.tool { width: 35px; height: 36px; margin: 5px 10px 0 0; background: #e1e1e1; border: 1px solid #adadad; display: flex; align-items: center; justify-content: center; }
.tool.on { width: 26px; background: #cce4f7; border-color: #005499; border-left: 0; padding-right: 6px; }
.tool.fit { margin-left: auto; width: 36px; margin-right: 6px; }
.send { width: 266px; height: 28px; margin: 9px 0 0 8px; background: #ccc; border: 1px solid #bfbfbf; color: #787878; text-align: center; line-height: 26px; letter-spacing: -.15px; }
.status { display: flex; align-items: center; gap: 13px; margin: 14px 0 0 10px; width: 340px; font-size: 13.700px; letter-spacing: -.3px; white-space: nowrap; }
.status span { width: 59px; margin-left: -5px; }
.status .io { margin-left: 18px; }
.status .io ~ .io { margin-left: 0; }
.collapse { width: 22px; padding: 329px 0 0 5px; }
.plot { width: 605px; height: 659px; margin-top: 9px; background: #fff; outline: 1px solid #dcdcdc; }
.axis { fill: none; stroke: #000; stroke-width: 1.8; }
.tick { stroke: #999; stroke-width: 1; }
.tick.major { stroke: #000; stroke-width: 1.3; }
.tick-label { font-family: "DejaVu Sans", sans-serif; font-size: 11px; letter-spacing: -.2px; }
.c1 { fill: #46befa; stroke: #3a9fd2; }
.c2 { fill: #ed462f; stroke: #c73b28; }
.c3 { fill: #aaf22b; stroke: #8fcb24; }
.c4 { fill: #f5b332; stroke: #ce962a; }
.c5 { fill: #ffff00; stroke: #d6d600; }
#points circle { fill-opacity: .5; stroke-opacity: .5; stroke-width: 1.3; }
#legend circle { fill-opacity: .5; stroke-width: 1.5; }
.legend-box { fill: #f3f3f3; fill-opacity: .85; stroke: #ccc; }
.sc-body .grip { align-self: flex-end; margin: 0 0 1px -6px; }

/* Orange canvas */
.orange-window { left: 986px; top: 25px; width: 934px; height: 1017px; background: #fff; }
.or-title { height: 38px; flex: none; padding: 0 0 0 8px; background: #7a7373; color: #fff; display: flex; align-items: center; gap: 4px; font: 15.300px var(--segoe); letter-spacing: -.55px; }
.or-title .win-buttons { color: #fff; gap: 44px; margin-right: -1px; }
.or-menu { height: 28px; flex: none; display: flex; padding-left: 10px; border-bottom: 1px solid #eee; font: 15.300px/27px var(--segoe); letter-spacing: -.4px; }
.or-menu span:nth-child(1) { width: 43px; }
.or-menu span:nth-child(2) { width: 46px; }
.or-menu span:nth-child(3) { width: 52.500px; }
.or-menu span:nth-child(4) { width: 68.500px; }
.or-menu span:nth-child(5) { width: 74px; }
.or-menu span:nth-child(6) { width: 73px; }
.or-body { flex: 1; display: flex; }
.dock { width: 364px; display: flex; flex-direction: column; border-left: 1px solid #888; border-right: 1px solid #999; background: #f0f0f0; }
.dock-head { height: 25px; background: linear-gradient(#828282, #666); display: flex; align-items: center; justify-content: flex-end; padding-right: 9px; }
.filter { height: 25px; margin: 1px 0 0; border: 1px solid #777; background: #fff; display: flex; align-items: center; gap: 8px; padding-left: 9px; color: #777; letter-spacing: 0; }
.palette { height: 691px; overflow: hidden; display: flex; justify-content: space-between; border-bottom: 1px solid #bbb; }
.tools { width: 340px; background: #f1f1f1; }
.tools h3 { height: 37px; display: flex; align-items: center; font-size: 17.500px; letter-spacing: -.35px; }
.cat-data { padding-left: 9px; gap: 20px; background: linear-gradient(#ffd39f 55%, #e6bf90); }
.cat-transform { padding-left: 11px; gap: 22px; background: linear-gradient(#ff9f61 55%, #e68f57); border-top: 1px solid #999; border-bottom: 1px solid #bbb; }
.grid { display: grid; grid-template-columns: repeat(4, 85px); grid-auto-rows: 105px; }
.grid div { display: grid; grid-template-rows: 66px 37px; align-items: center; justify-items: center; }
.grid svg { width: 47px; height: 47px; }
.grid svg.h52 { height: 51px; }
.grid svg.w52 { width: 51px; }
.grid svg.over { margin-left: 4px; }
.grid svg.h54 { height: 54px; }
.grid svg.big { width: 57px; height: 56px; }
.grid span { text-align: center; line-height: 16.500px; color: #333; }
.palette .qscroll { background: #f0f0f0; padding: 7px 0 7px; }
.palette .qscroll i { height: 151px; width: 20px; margin: 6px 0 auto; }
.splitter { height: 10px; background: #ececec; border-top: 2px solid #ccc; border-bottom: 1px solid #888; }
.help { height: 187px; background: #fff; padding: 5px 5px; line-height: 16px; letter-spacing: -.12px; }
.help h4 { color: #ffa500; font-weight: 700; font-size: 15px; line-height: 20px; margin-bottom: 16px; }
.help a { display: block; margin-top: 15px; color: #ffa500; text-decoration: underline; }
.dock-tools { flex: 1; display: grid; grid-template-columns: 60px 60px 62px 61px 61px 1fr; background: linear-gradient(#7a7a7a, #666); }
.dock-tools span { border-right: 1px solid #888; display: flex; justify-content: center; }
.dock-tools .on { background: #ffa840; border: 0; }
.canvas { width: 570px; height: 951px; background: #fff; box-shadow: inset 1px 0 #ddd; }
.links path { fill: none; stroke: #9caeb5; stroke-width: 2.2; }
.used { fill: none; stroke: #9caeb5; stroke-width: 4; stroke-linecap: round; }
.open { fill: none; stroke: #ccd5d9; stroke-width: 4.500; stroke-linecap: round; stroke-dasharray: 1.500 10.200; }
.dot { fill: #9caeb5; }
.link-label { font-size: 12px; text-anchor: middle; }
.node-label { font-size: 14px; text-anchor: middle; letter-spacing: 0; }

/* taskbar */
.taskbar { position: absolute; left: 0; top: 1042px; width: 1920px; height: 38px; display: flex; align-items: center; padding-left: 12px; font-family: var(--segoe);
  background: linear-gradient(rgba(90,100,110,0) 35%, rgba(60,75,100,.4)), linear-gradient(90deg, #12110c 0, #15140f 480px, #1d222c 620px, #20242b 780px, #303030 860px, #3c3b3d 1080px, #4a4d52 1275px, #6f5129 1300px, #6f5129 1330px, #808080 1362px, #7c7b7b 1700px, #6d7079 1920px); }
.taskview { margin-left: 24px; }
.apps { display: flex; height: 38px; margin-left: 773px; }
.app { width: 35px; margin-right: 11px; border-bottom: 3px solid #cdbcbc; display: flex; align-items: center; justify-content: center; }
.app svg { width: 22px; height: 22px; }
.app.none { border-color: transparent; }
.app.active { width: 45px; margin: 0 0 0 -5px; background: rgba(255,255,255,.22); }
.tray { flex: 1; height: 38px; display: flex; align-items: center; color: #fff; letter-spacing: -.3px; }
.tray > svg:first-child { margin-left: 379px; }
.tray b { font: 22px "DejaVu Sans Mono", monospace; letter-spacing: -2.300px; margin-top: -4px; }
.t54 { color: #00f6f6; width: 31px; margin-left: 11px; }
.t48 { color: #00e800; width: 33px; }
.t8 { color: #ffff00; width: 30px; }
.t30 { width: 29px; font-size: 12px; }
.wifi { margin-left: 11px; }
.bat { margin-left: 11px; }
.usb { margin-left: 13px; }
.kbd { margin-left: 10px; }
.eng { width: 45px; margin-left: 14px; font-size: 15px; letter-spacing: -.9px; }
.clock { width: 57px; font-size: 15px; letter-spacing: -.8px; }
.peek { width: 1px; height: 38px; margin-left: 25px; background: #aaa; }
```
FILE: plot.js
```js
const NS = 'http://www.w3.org/2000/svg';
function add(parent, name, attrs, text) {
  const el = document.createElementNS(NS, name);
  for (const key in attrs) el.setAttribute(key, attrs[key]);
  if (text) el.textContent = text;
  parent.appendChild(el);
}

// Axis ticks: every 0.02, labelled at every 0.1.
const ticks = document.getElementById('ticks');
const xAt = v => 380.8 + (v - 0.1) * 750.6;
const yAt = v => 741.5 - (v - 0.1) * 648;
function tickStyle(i) {
  if (i % 10 === 0) return ['tick major', 7];
  return i % 5 === 0 ? ['tick', 5] : ['tick', 4];
}
for (let i = 1; i <= 47; i++) {
  const y = yAt(i * 0.02), [cls, len] = tickStyle(i);
  add(ticks, 'line', { class: cls, x1: 354, x2: 354 + len, y1: y, y2: y });
  if (i % 5 === 0) add(ticks, 'text', { class: 'tick-label', x: 348.5, y: y + 4, 'text-anchor': 'end' }, (i * 0.02).toFixed(1));
}
for (let i = 4; i <= 40; i++) {
  const x = xAt(i * 0.02), [cls, len] = tickStyle(i);
  add(ticks, 'line', { class: cls, x1: x, x2: x, y1: 796, y2: 796 - len });
  if (i % 5 === 0 && i < 40) add(ticks, 'text', { class: 'tick-label', x: x, y: 809.5, 'text-anchor': 'middle' }, (i * 0.02).toFixed(1));
}

// Each cluster keeps its points on a local grid: origin, grid units per pixel, points.
const clusters = {
  c3: { at: [300, 170], unit: [3, 2.376], pts: [[561,107],[426,168],[422,185],[480,173],[467,190],[397,273],[387,309],[446,265],[465,256],[500,261],[450,340],[438,363],[492,311],[525,295],[525,335],[549,307],[561,272],[594,225],[633,200],[630,212],[693,200],[726,228],[681,249],[612,276],[651,280],[615,301],[714,285],[591,337],[630,344],[648,358],[681,323],[777,321],[696,387],[588,394],[570,411],[606,434],[648,430],[585,463],[546,480],[690,480],[459,456],[399,513],[456,522]] },
  c2: { at: [300, 170], unit: [3, 2.376], pts: [[567,1012],[621,1052],[441,1052],[402,1075],[386,1081],[336,1092],[351,1099],[368,1098],[378,1102],[432,1107],[204,1140],[315,1168],[357,1145],[396,1138],[410,1164],[450,1145],[477,1129],[489,1117],[540,1138],[588,1119],[591,1136],[747,1154],[441,1189],[432,1213],[459,1220],[450,1235],[495,1213],[495,1236],[507,1182],[528,1181],[534,1197],[585,1169],[594,1182],[615,1197],[603,1223],[528,1256],[699,1256],[666,1262],[663,1268],[375,1287],[300,1316],[513,1320],[522,1337]] },
  c4: { at: [620, 170], unit: [3, 3], pts: [[414,87],[714,87],[495,111],[489,117],[618,135],[834,162],[792,213],[540,183],[447,210],[483,207],[513,201],[579,204],[594,210],[606,231],[465,264],[546,294],[618,360],[675,342],[528,429]] },
  c1: { at: [620, 170], unit: [3, 3], pts: [[468,684],[492,681],[522,726],[555,729],[525,753],[426,747],[474,768],[528,783],[579,783],[645,777],[627,801],[630,819],[693,822],[486,819],[564,822],[507,859],[501,859],[591,858],[798,882],[423,885],[465,882],[480,885],[411,906],[445,900],[443,909],[453,930],[438,930],[558,906],[582,900],[645,897],[660,912],[582,933],[621,933],[246,921],[366,951],[330,966],[300,1005],[372,1011],[417,1003],[414,1041],[375,1056],[468,1038],[519,1053],[471,969],[477,978],[504,971],[512,966],[519,963],[561,984],[558,999],[594,993],[684,987],[717,1023],[765,1041],[288,1089]] },
  c5: { at: [620, 580], unit: [3, 3], pts: [[436,321],[438,324],[465,354],[603,330],[555,345],[537,366],[609,375],[516,399],[558,414],[654,399],[693,381],[573,447],[582,456],[645,462],[417,486],[495,498],[549,489],[597,516],[630,504],[672,528],[639,540],[414,600],[624,588]] }
};
const points = document.getElementById('points');
for (const name in clusters) {
  const { at, unit, pts } = clusters[name];
  for (const [px, py] of pts) {
    add(points, 'circle', { class: name, cx: (at[0] + px / unit[0]).toFixed(1), cy: (at[1] + py / unit[1]).toFixed(1), r: 8.3 });
  }
}

const legend = document.getElementById('legend');
['C1', 'C2', 'C3', 'C4', 'C5'].forEach((label, i) => {
  const y = 660.3 + i * 28.7;
  add(legend, 'circle', { class: label.toLowerCase(), cx: 872.5, cy: y, r: 6.3 });
  add(legend, 'text', { class: 'tick-label', x: 886, y: y + 2.5 }, label);
});
```
